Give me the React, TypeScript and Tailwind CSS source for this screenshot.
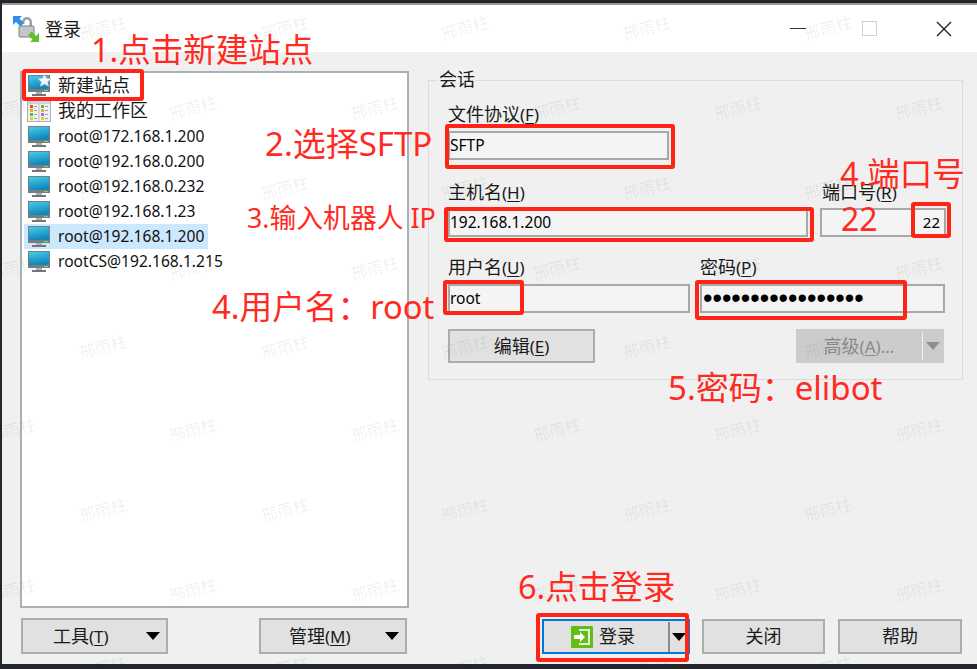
const marksA = [103, 285, 465, 647, 828];
const marksB = [12, 193, 375, 557, 738, 919];
const markRows = [
  { y: 28, xs: marksA },
  { y: 108, xs: marksB },
  { y: 188, xs: marksA },
  { y: 268, xs: marksB },
  { y: 347, xs: marksA },
  { y: 430, xs: marksB },
  { y: 510, xs: marksA },
  { y: 590, xs: marksB },
  { y: 668, xs: marksA },
];

const sites = [
  "root@172.168.1.200",
  "root@192.168.0.200",
  "root@192.168.0.232",
  "root@192.168.1.23",
  "root@192.168.1.200",
  "rootCS@192.168.1.215",
];

function Monitor({ star }: { star?: boolean }) {
  return (
    <svg width="24" height="24" viewBox="0 0 24 24" className="shrink-0">
      <defs>
        <linearGradient id="screen" x1="0" y1="0" x2="0.3" y2="1">
          <stop offset="0" stopColor="#45cdea" />
          <stop offset="1" stopColor="#1186bb" />
        </linearGradient>
      </defs>
      <rect x="1" y="1" width="22" height="17" fill="#767d83" />
      <rect x="2" y="2" width="20" height="13" fill="url(#screen)" />
      <rect x="17" y="16" width="4" height="1" fill="#6fe04f" />
      <rect x="9" y="18" width="6" height="2" fill="#aab0b5" />
      <rect x="5" y="20" width="14" height="2" fill="#70777c" />
      {star && (
        <path
          d="M17.5 0l2 4.200 4.500.6-3.300 3.100.9 4.500-4.100-2.300-4.100 2.300.9-4.500-3.300-3.100 4.500-.6z"
          fill="#f4f5f7"
          stroke="#b5bbc0"
          strokeWidth="0.6"
        />
      )}
    </svg>
  );
}

function Workspace() {
  const left = ["#e8532b", "#f5a623", "#57b947", "#f5c623"];
  const right = ["#57b947", "#e8b02b", "#a86be0", "#f5c623"];
  return (
    <svg width="24" height="22" viewBox="0 0 24 22" className="shrink-0">
      <rect x="0.5" y="0.5" width="23" height="21" fill="#eef0f2" stroke="#a9afb5" />
      <rect x="1" y="1" width="22" height="3" fill="#cfd4d9" />
      <rect x="11.5" y="4" width="1" height="17" fill="#b9bfc5" />
      {left.map((c, i) => (
        <g key={c + i}>
          <rect x="3" y={5 + i * 4} width="3" height="3" fill={c} />
          <rect x="7" y={6 + i * 4} width="3" height="1" fill="#9aa1a6" />
        </g>
      ))}
      {right.map((c, i) => (
        <g key={c + i}>
          <rect x="14" y={5 + i * 4} width="3" height="3" fill={c} />
          <rect x="18" y={6 + i * 4} width="3" height="1" fill="#9aa1a6" />
        </g>
      ))}
    </svg>
  );
}

function LockIcon() {
  return (
    <svg width="26" height="26" viewBox="0 0 26 26">
      <path d="M9 8V6a5 5 0 0 1 10 0v5h-2.500V6a2.500 2.500 0 0 0-5 0v2z" fill="#9b9fa3" />
      <rect x="6" y="10" width="15" height="11" rx="1" fill="#c4c7ca" stroke="#7b7f83" />
      <path d="M0 0h9L6.500 2.500 11 7l-3.500 3.500L3 6 0 9z" fill="#2f8fe8" />
      <path d="M26 26h-9l2.500-2.500L15 19l3.500-3.500L23 20l3-3z" fill="#5fbf2c" />
    </svg>
  );
}

function LoginIcon() {
  return (
    <svg width="22" height="22" viewBox="0 0 22 22" className="shrink-0">
      <rect width="22" height="22" rx="1" fill="#62bd14" />
      <path d="M8 4h10v14H8" fill="none" stroke="#e6f6d4" strokeWidth="2" />
      <path d="M3 9h6V6l5 5-5 5v-3H3z" fill="#ffffff" />
    </svg>
  );
}

function Caret({ className }: { className?: string }) {
  return (
    <svg width="14" height="8" viewBox="0 0 14 8" className={className}>
      <path d="M0 0h14L7 8z" fill="currentColor" />
    </svg>
  );
}

function Mnemonic({ text, k, tail }: { text: string; k: string; tail?: string }) {
  return (
    <span className="whitespace-nowrap">
      <span className="text-[18px]">{text}</span>
      <span className="text-[17px]">
        (<span className="underline underline-offset-2">{k}</span>){tail}
      </span>
    </span>
  );
}

function Field({ label, value, className }: { label: React.ReactNode; value?: string; className: string }) {
  return (
    <div className={className}>
      <div className="h-6 leading-6 text-[#1a1a1a]">{label}</div>
      <div className="mt-[5px] flex h-[29px] items-center border-2 border-[#a8a8a8] bg-[#f4f4f4] text-[15.5px] text-black">
        {value}
      </div>
    </div>
  );
}

function Annotation({ className, children }: { className: string; children: React.ReactNode }) {
  return (
    <div className={`absolute whitespace-nowrap leading-none text-[#ff2a22] ${className}`}>{children}</div>
  );
}

function RedBox({ className }: { className: string }) {
  return <div className={`absolute rounded-[3px] border-[4px] border-[#ff2416] ${className}`} />;
}

export default function App() {
  return (
    <div className="relative h-[669px] w-[977px] overflow-hidden bg-[#23272d] pl-[2px] pt-[3px] [font-family:'Noto_Sans','Noto_Sans_CJK_SC',sans-serif]">
      <div className="flex h-[661px] w-[975px] flex-col border-t-2 border-[#9a9a9a] bg-[#f0f0f0]">
        {/* title bar */}
        <div className="flex h-[47px] shrink-0 items-center bg-white pl-[11px]">
          <LockIcon />
          <span className="ml-[6px] mt-[2px] text-[18px] text-[#1a1a1a]">登录</span>
          <div className="ml-auto flex items-center">
            <div className="h-[1.5px] w-4 bg-[#333]" />
            <div className="ml-[56px] h-[15px] w-[15px] border border-[#cfcfcf]" />
            <svg width="16" height="16" viewBox="0 0 16 16" className="ml-[59px] mr-[25px]">
              <path d="M1 1l14 14M15 1L1 15" stroke="#222" strokeWidth="1.4" />
            </svg>
          </div>
        </div>

        <div className="flex flex-1">
          {/* site tree */}
          <div className="ml-[18px] flex w-[389px] flex-col pt-[19px]">
            <div className="h-[537px] border-2 border-[#a9b0b8] bg-white pl-[5px]">
              <div className="flex h-[25px] items-center text-[18px] text-[#1a1a1a]">
                <Monitor star />
                <span className="ml-[7px]">新建站点</span>
              </div>
              <div className="mb-px flex h-[25px] items-center text-[18px] text-[#1a1a1a]">
                <Workspace />
                <span className="ml-[7px]">我的工作区</span>
              </div>
              {sites.map((s, i) => (
                <div
                  key={s + i}
                  className={`-ml-[3px] flex h-[25px] w-[184px] items-center pl-[3px] text-[15.6px] text-[#111] ${i === 4 ? "bg-[#cce8ff]" : ""}`}
                >
                  <Monitor />
                  <span className="ml-[7px]">{s}</span>
                </div>
              ))}
            </div>
            <div className="mt-[10px] flex justify-between">
              <div className="ml-[1px] flex h-9 w-[147px] items-center border-2 border-[#adadad] bg-[#e1e1e1] pl-[30px] text-[#1a1a1a]">
                <Mnemonic text="工具" k="T" />
                <Caret className="ml-auto mr-[6px] text-black" />
              </div>
              <div className="mr-[2px] flex h-9 w-[148px] items-center border-2 border-[#adadad] bg-[#e1e1e1] pl-[28px] text-[#1a1a1a]">
                <Mnemonic text="管理" k="M" />
                <Caret className="ml-auto mr-[6px] text-black" />
              </div>
            </div>
          </div>

          {/* session panel */}
          <div className="ml-[19px] flex w-[535px] flex-col pt-[28px]">
            <div className="relative h-[300px] border border-[#dcdcdc] pl-[19px] pt-[21px]">
              <span className="absolute -top-[14px] left-[9px] bg-[#f0f0f0] px-[1px] text-[18px] leading-6 text-[#1a1a1a]">
                会话
              </span>
              <Field className="w-[221px]" label={<Mnemonic text="文件协议" k="F" />} value="SFTP" />
              <div className="mt-[20px] flex">
                <div className="w-[360px]">
                  <div className="h-6 leading-6 text-[#1a1a1a]">
                    <Mnemonic text="主机名" k="H" />
                  </div>
                  <div className="mt-1 flex h-[29px] items-center border-2 border-[#a8a8a8] bg-[#f4f4f4] text-[15.5px] text-black">
                    192.168.1.200
                  </div>
                </div>
                <div className="ml-[12px] w-[126px]">
                  <div className="ml-[2px] h-6 leading-6 text-[#1a1a1a]">
                    <Mnemonic text="端口号" k="R" />
                  </div>
                  <div className="mt-1 flex h-[29px] items-center justify-end border-2 border-[#a8a8a8] bg-[#f4f4f4] pr-[4px] text-[15px] text-black">
                    22
                  </div>
                </div>
              </div>
              <div className="mt-[18px] flex">
                <Field className="w-[242px]" label={<Mnemonic text="用户名" k="U" />} value="root" />
                <div className="ml-[10px] w-[245px]">
                  <div className="h-6 leading-6 text-[#1a1a1a]">
                    <Mnemonic text="密码" k="P" />
                  </div>
                  <div className="mt-[5px] flex h-[29px] items-center border-2 border-[#a8a8a8] bg-[#f4f4f4] pl-[1px] text-[27px] leading-none text-black [font-family:'Liberation_Sans',sans-serif]">
                    •••••••••••••••••
                  </div>
                </div>
              </div>
              <div className="mt-4 flex">
                <div className="flex h-[34px] w-[147px] items-center justify-center border-2 border-[#adadad] bg-[#e1e1e1] text-[#1a1a1a]">
                  <Mnemonic text="编辑" k="E" />
                </div>
                <div className="ml-[201px] flex h-[34px] w-[148px] items-center bg-[#cccccc] text-[#8a8a8a]">
                  <div className="flex h-full w-[126px] items-center justify-center">
                    <Mnemonic text="高级" k="A" tail="..." />
                  </div>
                  <div className="h-[28px] w-[1px] bg-[#f0f0f0]" />
                  <Caret className="ml-[3px] text-[#8f8f8f]" />
                </div>
              </div>
            </div>

            <div className="mt-auto mb-[10px] flex">
              <div className="ml-[114px] flex h-[35px] w-[148px] items-center border-2 border-[#0078d7] bg-[#e1e1e1]">
                <div className="flex w-[124px] items-center justify-center pr-[6px] text-[18px] text-[#1a1a1a]">
                  <LoginIcon />
                  <span className="ml-[6px]">登录</span>
                </div>
                <div className="h-[30px] w-[2px] bg-[#8a8a8a]" />
                <Caret className="ml-[2px] text-black" />
              </div>
              <div className="ml-[12px] flex h-[35px] w-[123px] items-center justify-center border-2 border-[#adadad] bg-[#e1e1e1] text-[18px] text-[#1a1a1a]">
                关闭
              </div>
              <div className="ml-[13px] flex h-[35px] w-[124px] items-center justify-center border-2 border-[#adadad] bg-[#e1e1e1] text-[18px] text-[#1a1a1a]">
                帮助
              </div>
            </div>
          </div>
        </div>
      </div>

      {/* watermark */}
      {markRows.map((r) =>
        r.xs.map((x) => (
          <span
            key={`${r.y}-${x}`}
            className="pointer-events-none absolute -translate-x-1/2 -translate-y-1/2 -rotate-[15deg] whitespace-nowrap text-[16px] text-[#000000]/[0.07]"
            style={{ left: x, top: r.y }}
          >
            邢雨柱
          </span>
        )),
      )}

      {/* red markup drawn over the dialog */}
      <RedBox className="left-[22px] top-[69px] h-[32px] w-[122px]" />
      <RedBox className="left-[445px] top-[124px] h-[45px] w-[230px]" />
      <RedBox className="left-[444px] top-[207px] h-[35px] w-[370px]" />
      <RedBox className="left-[911px] top-[202px] h-[36px] w-[40px]" />
      <RedBox className="left-[443px] top-[280px] h-[35px] w-[81px]" />
      <RedBox className="left-[695px] top-[280px] h-[40px] w-[212px]" />
      <RedBox className="left-[536px] top-[613px] h-[49px] w-[153px]" />

      <Annotation className="left-[91px] top-[34px] text-[32.5px]">1.点击新建站点</Annotation>
      <Annotation className="left-[265px] top-[127px] text-[33px]">2.选择SFTP</Annotation>
      <Annotation className="left-[247px] top-[205px] text-[26.8px]">3.输入机器人 IP</Annotation>
      <Annotation className="left-[840px] top-[158px] text-[32.5px]">4.端口号</Annotation>
      <Annotation className="left-[841px] top-[203px] text-[32px]">22</Annotation>
      <Annotation className="left-[212px] top-[291px] text-[32.7px]">4.用户名：root</Annotation>
      <Annotation className="left-[668px] top-[371px] text-[33px]">5.密码：elibot</Annotation>
      <Annotation className="left-[518px] top-[571px] text-[32.5px]">6.点击登录</Annotation>
    </div>
  );
}
